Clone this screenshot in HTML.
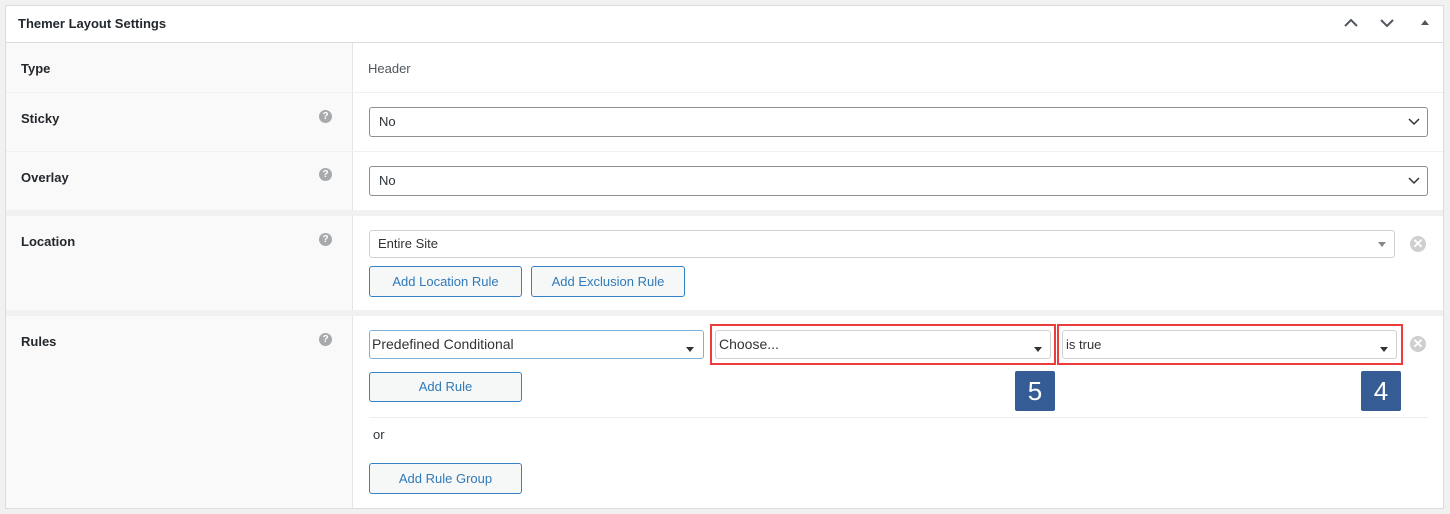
<!DOCTYPE html>
<html><head><style>
*{box-sizing:border-box;margin:0;padding:0}
body{width:1450px;height:514px;background:#f1f1f1;font-family:"Liberation Sans",sans-serif;font-size:13px;color:#32373c;position:relative;overflow:hidden}
.a{position:absolute}
.panel{left:5px;top:5px;width:1439px;height:504px;background:#fff;border:1px solid #dcdcde}
.lab{font-weight:bold;font-size:13px;color:#23282d}
.q{width:13px;height:13px;border-radius:50%;background:#a7aaad;color:#fff;font-size:10px;font-weight:bold;text-align:center;line-height:13px}
.sel{background:#fff;border:1px solid #8c8f94;border-radius:3px;padding-left:9px;font-size:13px;color:#2c3338}
.s2{background:#fff;border:1px solid #d0d0d0;border-radius:3px;padding-left:8px;font-size:13px;color:#333}
.btn{background:#f6f7f7;border:1px solid #3582c4;border-radius:3px;color:#2f7ab8;font-size:13px;text-align:center}
.red{border:2px solid #ee3b3b}
.badge{background:#365c96;color:#fff;font-size:26px;text-align:center;line-height:40px;border-radius:2px}
.tri{width:0;height:0;border-left:4px solid transparent;border-right:4px solid transparent;border-top:5px solid #333}
.x{width:16px;height:16px;border-radius:50%;background:#cfcfcf;color:#fff;font-size:13px;font-weight:bold;text-align:center;line-height:16px}
.gap{background:#f1f1f1;left:6px;width:1437px;height:6px}
</style></head><body>
<div class="a panel"></div>
<div class="a" style="left:6px;top:42px;width:1437px;height:1px;background:#dcdcde"></div>
<div class="a lab" style="left:18px;top:16px;font-size:13px">Themer Layout Settings</div>
<svg class="a" style="left:1343px;top:16px" width="100" height="14"><path d="M2 10 L8 4 L14 10" stroke="#50575e" stroke-width="2" fill="none"/><path d="M38 4 L44 10 L50 4" stroke="#50575e" stroke-width="2" fill="none"/><path d="M78 9 L82 4 L86 9Z" fill="#50575e"/></svg>
<div class="a" style="left:6px;top:43px;width:346px;height:465px;background:#f9f9f9"></div>
<div class="a" style="left:352px;top:43px;width:1px;height:465px;background:#e5e5e5"></div>
<div class="a" style="left:6px;top:92px;width:1437px;height:1px;background:#f0f0f0"></div>
<div class="a" style="left:6px;top:151px;width:1437px;height:1px;background:#f0f0f0"></div>
<div class="a gap" style="top:210px"></div>
<div class="a gap" style="top:310px"></div>
<div class="a lab" style="left:21px;top:61px">Type</div>
<div class="a" style="left:368px;top:61px;color:#50575e">Header</div>
<div class="a lab" style="left:21px;top:111px">Sticky</div><div class="a q" style="left:319px;top:110px">?</div>
<div class="a sel" style="left:369px;top:107px;width:1059px;height:30px;line-height:28px">No</div>
<svg class="a" style="left:1408px;top:118px" width="12" height="8"><path d="M1 1 L6 6 L11 1" stroke="#333" stroke-width="1.5" fill="none"/></svg>
<div class="a lab" style="left:21px;top:170px">Overlay</div><div class="a q" style="left:319px;top:168px">?</div>
<div class="a sel" style="left:369px;top:166px;width:1059px;height:30px;line-height:28px">No</div>
<svg class="a" style="left:1408px;top:177px" width="12" height="8"><path d="M1 1 L6 6 L11 1" stroke="#333" stroke-width="1.5" fill="none"/></svg>
<div class="a lab" style="left:21px;top:234px">Location</div><div class="a q" style="left:319px;top:233px">?</div>
<div class="a s2" style="left:369px;top:230px;width:1026px;height:28px;line-height:26px">Entire Site</div>
<div class="a tri" style="left:1378px;top:242px;border-top-color:#888"></div>
<div class="a x" style="left:1410px;top:236px">✕</div>
<div class="a btn" style="left:369px;top:266px;width:153px;height:31px;line-height:29px">Add Location Rule</div>
<div class="a btn" style="left:531px;top:266px;width:154px;height:31px;line-height:29px">Add Exclusion Rule</div>
<div class="a lab" style="left:21px;top:334px">Rules</div><div class="a q" style="left:319px;top:333px">?</div>
<div class="a s2" style="left:369px;top:330px;width:335px;height:29px;line-height:27px;border-color:#7eb1d9;padding-left:2px;font-size:14px">Predefined Conditional</div>
<div class="a tri" style="left:686px;top:347px"></div>
<div class="a red" style="left:710px;top:324px;width:346px;height:41px"></div>
<div class="a s2" style="left:715px;top:330px;width:336px;height:29px;line-height:27px;padding-left:3px;font-size:14px">Choose...</div>
<div class="a tri" style="left:1034px;top:347px"></div>
<div class="a red" style="left:1057px;top:324px;width:346px;height:41px"></div>
<div class="a s2" style="left:1062px;top:330px;width:335px;height:29px;line-height:27px;padding-left:3px">is true</div>
<div class="a tri" style="left:1380px;top:347px"></div>
<div class="a x" style="left:1410px;top:336px">✕</div>
<div class="a badge" style="left:1015px;top:371px;width:40px;height:40px">5</div>
<div class="a badge" style="left:1361px;top:371px;width:40px;height:40px">4</div>
<div class="a btn" style="left:369px;top:372px;width:153px;height:30px;line-height:28px">Add Rule</div>
<div class="a" style="left:369px;top:417px;width:1059px;height:1px;background:#eee"></div>
<div class="a" style="left:373px;top:427px">or</div>
<div class="a btn" style="left:369px;top:463px;width:153px;height:31px;line-height:29px">Add Rule Group</div>
</body></html>
